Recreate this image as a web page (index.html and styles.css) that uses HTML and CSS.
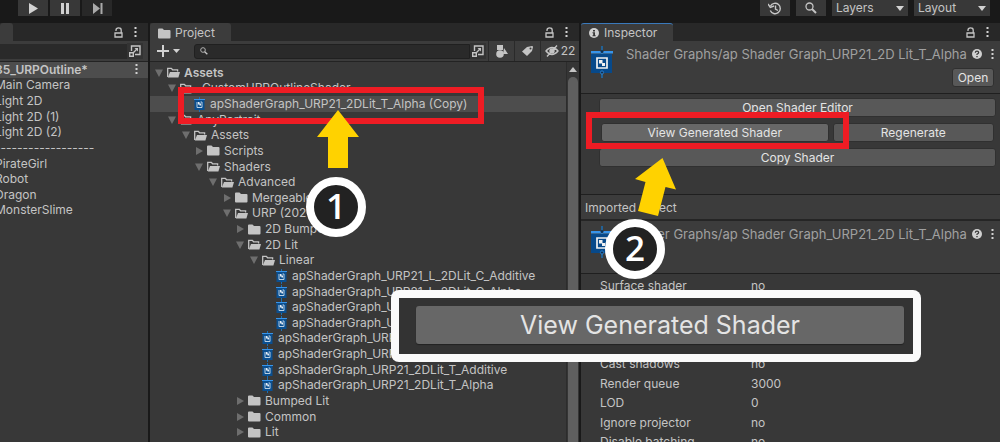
FILE: index.html
```html
<!DOCTYPE html>
<html lang="en">
<head>
<meta charset="utf-8">
<meta name="viewport" content="width=device-width, initial-scale=1">
<title>Shader Graph Inspector</title>
<link rel="stylesheet" href="styles.css">
</head>
<body>
<svg class="defs" aria-hidden="true">
  <symbol id="folder" viewBox="0 0 13 11"><path d="M0 1.5Q0 .5 1 .5H4.5L6 2H11.5Q12.5 2 12.5 3V9.5Q12.5 10.5 11.5 10.5H1Q0 10.5 0 9.5Z" fill="#c4c4c4"/></symbol>
  <symbol id="open" viewBox="0 0 13 11"><path d="M.7 10V1.3H4.3L5.6 2.8H10.6V4.6" fill="none" stroke="#c4c4c4" stroke-width="1.3"/><path d="M3 5H13L11.4 10.5H.8Z" fill="#c4c4c4"/></symbol>
  <symbol id="down" viewBox="0 0 8 8"><path d="M0 .5H8L4 8Z" fill="#6e6e6e"/></symbol>
  <symbol id="right" viewBox="0 0 8 8"><path d="M1 0L8 4L1 8Z" fill="#6e6e6e"/></symbol>
  <symbol id="shader" viewBox="0 0 22 32"><path d="M11 0V32" stroke="#1b6fb5" stroke-width="1.5"/><path d="M0 8H21V27H0Z" fill="#07498a"/><path d="M0 5H22V7.500H0Z" fill="#3794ea"/><circle cx="11" cy="5.500" r="1.500" fill="#103050"/><circle cx="11" cy="26.500" r="1.600" fill="#103050" stroke="#3794ea" stroke-width=".7"/><path d="M6 12H16V22H6Z" fill="none" stroke="#f1f1f1" stroke-width="1.700"/><path d="M8 14H11.500V17.500H8ZM11 17H14V20H11Z" fill="#f1f1f1"/></symbol>
  <symbol id="asset" viewBox="0 0 11 16"><path d="M5.500 1V16" stroke="#1b6fb5"/><path d="M.5 4H10.500V14H.5Z" fill="#0a4f90"/><path d="M0 3H11V4H0Z" fill="#3794ea"/><path d="M3 6V11.500H8V6H6.500" fill="none" stroke="#b9cfe2"/><path d="M4 6H5.500V7.500H7V9.500H5.500V8.500H4Z" fill="#e6eef5"/></symbol>
  <symbol id="lock" viewBox="0 0 9 11"><path d="M1 6H8V10H1ZM2 4V3Q2 .8 4.600 .8T7.200 3V6" fill="none" stroke="#c4c4c4" stroke-width="1.300"/></symbol>
  <symbol id="dots" viewBox="0 0 3 11"><path d="M.5 0H2.500V2H.5ZM.5 4H2.500V6H.5ZM.5 8H2.500V10H.5Z" fill="#d2d2d2"/></symbol>
  <symbol id="lens" viewBox="0 0 12 12"><circle cx="4.500" cy="4.500" r="3.500" fill="none" stroke="#c4c4c4" stroke-width="1.300"/><path d="M7 7L11 11" stroke="#c4c4c4" stroke-width="2"/></symbol>
  <symbol id="popout" viewBox="0 0 12 12"><path d="M2.500 6V1H11V9.500H6" fill="none" stroke="#c4c4c4" stroke-width="1.400"/><path d="M.7 7.700H4.300V11.300H.7ZM4.500 7.500L8 4" fill="none" stroke="#c4c4c4" stroke-width="1.400"/><path d="M5.500 3H9V6.500Z" fill="#c4c4c4"/></symbol>
  <symbol id="help" viewBox="0 0 10 10"><circle cx="5" cy="5" r="5" fill="#d0d0d0"/><path d="M3.300 3.800Q3.400 2.200 5 2.200T6.700 3.600Q6.700 4.500 5 5.200V6" fill="none" stroke="#383838" stroke-width="1.200"/><path d="M4.300 6.900H5.700V8.200H4.300Z" fill="#383838"/></symbol>
</svg>

<div class="editor">
  <header class="topbar">
    <div class="playback">
      <button class="tool" aria-label="Play"><svg width="9" height="11"><path d="M0 0L9 5.500L0 11Z" fill="#d2d2d2"/></svg></button>
      <button class="tool" aria-label="Pause"><svg width="9" height="11"><path d="M0 0H3V11H0ZM5 0H8V11H5Z" fill="#d2d2d2"/></svg></button>
      <button class="tool tool-off" aria-label="Step"><svg width="11" height="11"><path d="M1 0L8 5.500L1 11ZM8.500 0H10.500V11H8.500Z" fill="#aaa"/></svg></button>
    </div>
    <div class="topbar-right">
      <button class="tool" aria-label="History"><svg width="14" height="13" viewBox="0 0 14 13" fill="none" stroke="#c8c8c8" stroke-width="1.400"><path d="M2.500 4A5.200 5.200 0 1 1 2.300 8.500M7.500 3.500V7L10 8.500"/><path d="M0 2L2.300 5.500L6 4" /></svg></button>
      <button class="tool" aria-label="Search"><svg class="lens"><use href="#lens"/></svg></button>
      <span class="drop"><select aria-label="Layers"><option>Layers</option></select><svg width="8" height="5"><path d="M0 0H8L4 5Z" fill="#d2d2d2"/></svg></span>
      <span class="drop"><select aria-label="Layout"><option>Layout</option></select><svg width="8" height="5"><path d="M0 0H8L4 5Z" fill="#d2d2d2"/></svg></span>
    </div>
  </header>

  <main class="panes">
    <section class="pane" aria-label="Hierarchy">
      <div class="tabs"><span class="tab tab-stub"></span><span class="tab-tools"><svg class="lock"><use href="#lock"/></svg><svg class="dots"><use href="#dots"/></svg></span></div>
      <div class="bar bar-left"><input class="field" type="text" aria-label="Search hierarchy"><button class="pop" aria-label="Open search"><svg class="pop-icon"><use href="#popout"/></svg></button></div>
      <ul class="list scene">
        <li class="scene-head"><b>85_URPOutline*</b><svg class="dots"><use href="#dots"/></svg></li>
        <li>Main Camera</li>
        <li>Light 2D</li>
        <li>Light 2D (1)</li>
        <li>Light 2D (2)</li>
        <li>------------------</li>
        <li>PirateGirl</li>
        <li>Robot</li>
        <li>Dragon</li>
        <li>MonsterSlime</li>
      </ul>
    </section>

    <section class="pane" aria-label="Project">
      <div class="tabs"><span class="tab"><svg class="folder"><use href="#folder"/></svg>Project</span><span class="tab-tools"><svg class="lock"><use href="#lock"/></svg><svg class="dots"><use href="#dots"/></svg></span></div>
      <div class="bar">
        <button class="add" aria-label="Create"><svg width="24" height="12"><path d="M0 6H12M6 0V12" stroke="#d2d2d2" stroke-width="2"/><path d="M16 4H23L19.500 8Z" fill="#d2d2d2"/></svg></button>
        <label class="search"><svg class="lens-small"><use href="#lens"/></svg><input class="field" type="text" aria-label="Search project"></label>
        <button class="pop" aria-label="Open search"><svg class="pop-icon"><use href="#popout"/></svg></button>
        <button class="filter" aria-label="Filter by type"><svg width="12" height="13" fill="#c4c4c4"><path d="M1 0H7V5H1ZM8 3L12 9H7Z"/><circle cx="4" cy="9" r="3.800"/></svg></button>
        <button class="filter" aria-label="Filter by label"><svg width="11" height="10"><path d="M5 1L10 0Q11 0 11 1L10 5L5 10L0 5.500Z" fill="#c4c4c4"/><circle cx="8.500" cy="2.500" r="1" fill="#3c3c3c"/></svg></button>
        <button class="filter filter-wide"><svg width="14" height="12" viewBox="0 0 14 12" fill="none" stroke="#c4c4c4" stroke-width="1.400"><path d="M1 6Q7 -1 13 6Q7 13 1 6ZM2 11.500L12 .5"/><circle cx="7" cy="6" r="2" fill="#c4c4c4"/></svg>22</button>
      </div>
      <div class="tree-wrap">
        <ul class="list tree">
          <li class="d0"><svg class="arrow"><use href="#down"/></svg><svg class="folder"><use href="#open"/></svg><b>Assets</b></li>
          <li class="d1"><svg class="arrow"><use href="#down"/></svg><svg class="folder"><use href="#open"/></svg>_CustomURPOutlineShader</li>
          <li class="d2 asset selected"><svg class="asset-icon"><use href="#asset"/></svg>apShaderGraph_URP21_2DLit_T_Alpha (Copy)</li>
          <li class="d1"><svg class="arrow"><use href="#down"/></svg><svg class="folder"><use href="#open"/></svg>AnyPortrait</li>
          <li class="d2"><svg class="arrow"><use href="#down"/></svg><svg class="folder"><use href="#open"/></svg>Assets</li>
          <li class="d3"><svg class="arrow"><use href="#right"/></svg><svg class="folder"><use href="#folder"/></svg>Scripts</li>
          <li class="d3"><svg class="arrow"><use href="#down"/></svg><svg class="folder"><use href="#open"/></svg>Shaders</li>
          <li class="d4"><svg class="arrow"><use href="#down"/></svg><svg class="folder"><use href="#open"/></svg>Advanced</li>
          <li class="d5"><svg class="arrow"><use href="#right"/></svg><svg class="folder"><use href="#folder"/></svg>Mergeable</li>
          <li class="d5"><svg class="arrow"><use href="#down"/></svg><svg class="folder"><use href="#open"/></svg>URP (2021)</li>
          <li class="d6"><svg class="arrow"><use href="#right"/></svg><svg class="folder"><use href="#folder"/></svg>2D Bumped</li>
          <li class="d6"><svg class="arrow"><use href="#down"/></svg><svg class="folder"><use href="#open"/></svg>2D Lit</li>
          <li class="d7"><svg class="arrow"><use href="#down"/></svg><svg class="folder"><use href="#open"/></svg>Linear</li>
          <li class="d8 asset"><svg class="asset-icon"><use href="#asset"/></svg>apShaderGraph_URP21_L_2DLit_C_Additive</li>
          <li class="d8 asset"><svg class="asset-icon"><use href="#asset"/></svg>apShaderGraph_URP21_L_2DLit_C_Alpha</li>
          <li class="d8 asset"><svg class="asset-icon"><use href="#asset"/></svg>apShaderGraph_URP21</li>
          <li class="d8 asset"><svg class="asset-icon"><use href="#asset"/></svg>apShaderGraph_URP21</li>
          <li class="d7 asset"><svg class="asset-icon"><use href="#asset"/></svg>apShaderGraph_URP21</li>
          <li class="d7 asset"><svg class="asset-icon"><use href="#asset"/></svg>apShaderGraph_URP21</li>
          <li class="d7 asset"><svg class="asset-icon"><use href="#asset"/></svg>apShaderGraph_URP21_2DLit_T_Additive</li>
          <li class="d7 asset"><svg class="asset-icon"><use href="#asset"/></svg>apShaderGraph_URP21_2DLit_T_Alpha</li>
          <li class="d6"><svg class="arrow"><use href="#right"/></svg><svg class="folder"><use href="#folder"/></svg>Bumped Lit</li>
          <li class="d6"><svg class="arrow"><use href="#right"/></svg><svg class="folder"><use href="#folder"/></svg>Common</li>
          <li class="d6"><svg class="arrow"><use href="#right"/></svg><svg class="folder"><use href="#folder"/></svg>Lit</li>
        </ul>
        <div class="scroll"><svg width="8" height="5"><path d="M0 5H8L4 0Z" fill="#c4c4c4"/></svg><span class="thumb"></span></div>
      </div>
    </section>

    <section class="pane" aria-label="Inspector">
      <div class="tabs"><span class="tab tab-active"><svg width="10" height="10"><circle cx="5" cy="5" r="5" fill="#d0d0d0"/><path d="M4 2H6V3.500H4ZM3.500 4.300H6V7.300H6.700V8.200H3.500V7.300H4.200V5.200H3.500Z" fill="#383838"/></svg>Inspector</span><span class="tab-tools"><svg class="lock"><use href="#lock"/></svg><svg class="dots"><use href="#dots"/></svg></span></div>
      <div class="object">
        <svg class="shader-icon"><use href="#shader"/></svg>
        <h1 class="title">Shader Graphs/ap Shader Graph_URP21_2D Lit_T_Alpha</h1>
        <svg class="help"><use href="#help"/></svg><svg class="dots"><use href="#dots"/></svg>
        <button class="btn btn-open">Open</button>
      </div>
      <div class="actions">
        <button class="btn">Open Shader Editor</button>
        <div class="pair"><button class="btn btn-lit">View Generated Shader</button><button class="btn">Regenerate</button></div>
        <button class="btn">Copy Shader</button>
      </div>
      <h2 class="imported">Imported Object</h2>
      <div class="object">
        <svg class="shader-icon"><use href="#shader"/></svg>
        <h2 class="title">Shader Graphs/ap Shader Graph_URP21_2D Lit_T_Alpha</h2>
        <svg class="help"><use href="#help"/></svg><svg class="dots"><use href="#dots"/></svg>
      </div>
      <dl class="props">
        <div class="spaced"><dt>Surface shader</dt><dd>no</dd></div>
        <div><dt>Cast shadows</dt><dd>no</dd></div>
        <div><dt>Render queue</dt><dd>3000</dd></div>
        <div><dt>LOD</dt><dd>0</dd></div>
        <div><dt>Ignore projector</dt><dd>no</dd></div>
        <div><dt>Disable batching</dt><dd>no</dd></div>
      </dl>
    </section>
  </main>

  <div class="mark mark-asset"></div>
  <div class="mark mark-view"></div>
  <svg class="pointer pointer-one" width="42" height="58"><path d="M21 0L42 27H31V58H11V27H0Z" fill="#ffd200"/></svg>
  <svg class="pointer pointer-two" width="42" height="58"><path d="M27.500 0L41 31.500L30.500 29L23 58L3 53L10.500 24L0 21Z" fill="#ffd200"/></svg>
  <div class="step step-one">1</div>
  <div class="step step-two">2</div>
  <div class="callout"><button class="callout-button">View Generated Shader</button></div>
</div>
</body>
</html>
```
FILE: styles.css
```css
* { box-sizing: border-box; }

body {
  margin: 0;
  background: #191919;
  color: #c4c4c4;
  font: 12px/16px Inter, "Liberation Sans", sans-serif;
}

button, input, select { font: inherit; color: inherit; border: 0; margin: 0; padding: 0; background: none; }
ul, dl, dd, h1, h2 { margin: 0; padding: 0; font-size: inherit; font-weight: 400; list-style: none; }
svg { flex: none; display: block; }

.defs { position: absolute; width: 0; height: 0; }
.folder { width: 13px; height: 11px; }
.arrow { width: 8px; height: 8px; }
.asset-icon { width: 11px; height: 16px; }
.shader-icon { width: 22px; height: 32px; }
.lock { width: 9px; height: 11px; }
.dots { width: 3px; height: 11px; }
.lens { width: 12px; height: 12px; }
.lens-small { width: 8px; height: 8px; }
.pop-icon { width: 12px; height: 12px; }
.help { width: 10px; height: 10px; }

.editor {
  position: relative;
  height: 100vh;
  display: flex;
  flex-direction: column;
  overflow: hidden;
}

.topbar { display: flex; justify-content: space-between; height: 23px; padding: 0 10px 7px 18px; }
.playback { display: flex; gap: 2px; }
.topbar-right { display: flex; gap: 6px; }
.tool { display: flex; align-items: center; justify-content: center; width: 30px; background: #383838; }
.tool-off { background: #282828; }
.drop { display: flex; align-items: center; width: 76px; padding-right: 4px; background: #383838; }
.drop select { appearance: none; flex: 1; min-width: 0; padding-left: 4px; }

.panes { flex: 1; min-height: 0; display: grid; grid-template-columns: 148px minmax(0, 1fr) 419px; gap: 2px; }
.pane { display: flex; flex-direction: column; min-width: 0; min-height: 0; background: #383838; }

.tabs { display: flex; justify-content: space-between; height: 18px; background: #282828; }
.tab { display: flex; align-items: center; gap: 4px; padding: 2px 16px 0 8px; background: #3c3c3c; border-radius: 3px 3px 0 0; }
.tab-stub { width: 13px; padding: 0; }
.tab-active { gap: 5px; border-top: 1px solid #3a79bb; padding-top: 1px; }
.tab-tools { display: flex; align-items: center; gap: 11px; padding-right: 11px; }

.bar { display: flex; align-items: center; height: 21px; padding-left: 7px; background: #3c3c3c; border-bottom: 1px solid #232323; }
.bar-left { padding: 0 5px 0 0; }
.field { flex: 1; min-width: 0; height: 15px; background: #2a2a2a; }
.pop { display: flex; align-items: center; justify-content: center; width: 16px; height: 16px; background: #333; }
.add { width: 37px; }
.search { flex: 1; display: flex; align-items: center; height: 15px; padding-left: 5px; background: #2a2a2a; border: 1px solid #202020; border-radius: 3px 0 0 3px; }
.search .field { height: 13px; }
.filter { display: flex; align-items: center; justify-content: center; gap: 2px; width: 26px; height: 20px; border-left: 1px solid #2a2a2a; }
.pop + .filter { margin-left: 2px; }
.filter-wide { width: 39px; }

.list { flex: 1; min-width: 0; min-height: 0; display: grid; grid-template-rows: repeat(24, minmax(0, 1fr)); }
.list li { display: flex; align-items: center; min-width: 0; white-space: nowrap; }
.scene { padding-bottom: 5px; overflow: hidden; text-indent: -5px; }
.list .scene-head { justify-content: space-between; padding-right: 10px; background: #4d4d4d; }
b { font-weight: 600; }

.tree-wrap { flex: 1; display: flex; min-height: 0; }
.tree { padding: 3px 0 2px; }
.tree .arrow { margin-right: 4px; }
.tree .folder { margin-right: 4px; }
.tree .asset-icon { margin: 0 5px 0 12px; }
.tree .selected { background: #4d4d4d; }
.d0 { padding-left: 5px; }
.d1 { padding-left: 18px; }
.d2 { padding-left: 32px; }
.d3 { padding-left: 45px; }
.d4 { padding-left: 59px; }
.d5 { padding-left: 73px; }
.d6 { padding-left: 86px; }
.d7 { padding-left: 100px; }
.d8 { padding-left: 114px; }
.scroll { display: flex; flex-direction: column; align-items: center; gap: 5px; width: 13px; padding: 5px 0 0; background: #353535; border-left: 1px solid #2c2c2c; }
.thumb { flex: 1; width: 10px; background: #5f5f5f; border-radius: 5px 5px 0 0; }

.object {
  display: grid;
  grid-template-columns: 35px minmax(0, 1fr) 10px 3px;
  align-items: start;
  height: 53px;
  padding: 5px 6px 0 10px;
  background: #3c3c3c;
  border-bottom: 1px solid #1f1f1f;
}
.object .shader-icon { grid-row: span 2; }
.title { font-size: 13px; color: #a0a0a0; white-space: nowrap; }
.object .help, .object .dots { margin-top: 3px; }
.object .help { margin-left: -9px; }
.btn { height: 19px; background: #585858; border: 1px solid #303030; border-radius: 3px; color: #e4e4e4; line-height: 17px; }
.btn-lit { background: #676767; }
.btn-open { grid-column: 2 / -1; justify-self: end; width: 42px; }

.actions { display: flex; flex-direction: column; gap: 6px; height: 100px; padding: 4px 4px 0 18px; }
.pair { display: grid; grid-template-columns: 227fr 161fr; gap: 4px; padding: 0 2px; }
.imported { height: 27px; padding: 5px 4px; background: #3c3c3c; border-top: 1px solid #1f1f1f; border-bottom: 2px solid #252525; }

.props {
  flex: 1;
  min-height: 0;
  display: grid;
  grid-template-rows: repeat(8, minmax(0, 2fr)) minmax(0, 1fr);
  padding: 2px 0 0 19px;
}
.props div { display: grid; grid-template-columns: 151px 1fr; line-height: 20px; align-items: start; }
.props .spaced { grid-row: span 4; }

.mark { position: absolute; border: 6px solid #ee1c24; }
.mark-asset { left: 178px; top: 87px; width: 306px; height: 37px; }
.mark-view { left: 586px; top: 112px; width: 263px; height: 37px; }
.pointer { position: absolute; }
.pointer-one { left: 317px; top: 110px; }
.pointer-two { left: 635px; top: 158px; }
.step {
  position: absolute;
  width: 60px;
  height: 60px;
  border: 8px solid #fff;
  border-radius: 50%;
  background: #222;
  color: #fff;
  font: 600 35px/42px "Open Sans", "Noto Sans", sans-serif;
  text-align: center;
}
.step-one { left: 306px; top: 177px; }
.step-two { left: 605px; top: 219px; }
.callout {
  position: absolute;
  left: 391px;
  top: 290px;
  width: 530px;
  display: flex;
  padding: 16px 17px 18px 25px;
  border-radius: 8px;
  background: #fafafa;
}
.callout::before { content: ""; position: absolute; inset: 8px; background: #333; }
.callout-button {
  position: relative;
  flex: 1;
  height: 38px;
  background: #676767;
  border-radius: 3px;
  box-shadow: 0 1px 1px #222;
  color: #e4e4e4;
  font-size: 25px;
  line-height: 38px;
}
```
